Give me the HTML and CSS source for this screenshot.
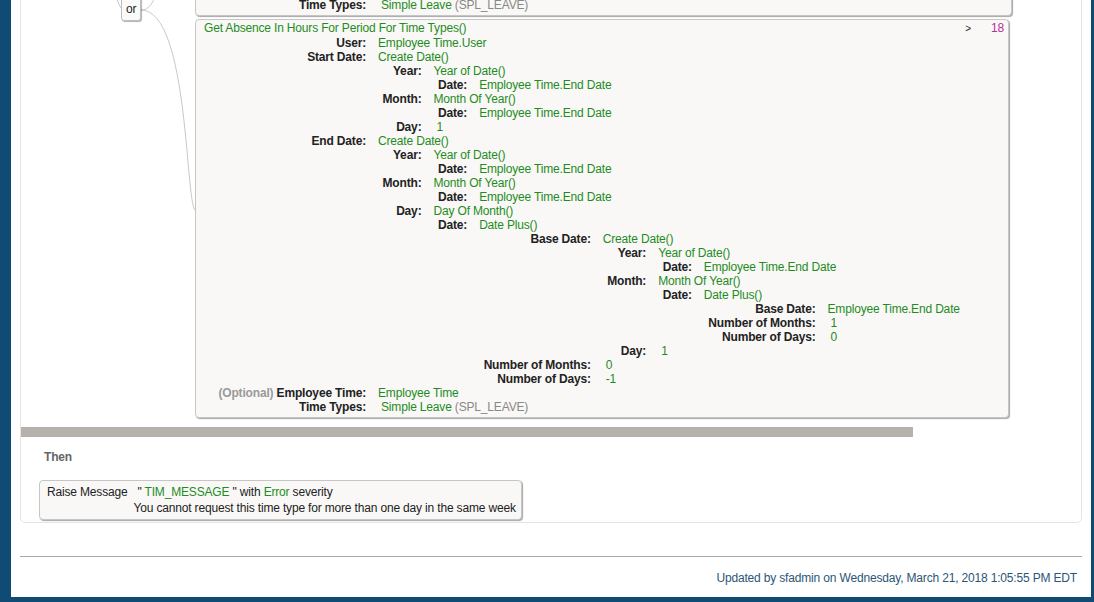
FILE: index.html
```html
<!DOCTYPE html>
<html>
<head>
<meta charset="utf-8">
<title>Rule</title>
<link rel="stylesheet" href="styles.css">
</head>
<body>
<div class="page">
  <div class="card">
    <div class="canvas">
      <div class="diagram">
        <svg class="links" width="174" height="240" viewBox="21 -4 174 240">
          <path d="M141 10 C 190 10, 185 211, 196 211" />
          <path d="M141 10 C 150 10, 152 2, 156 -4" />
          <path d="M121 8 C 119 5, 118 2, 116 -4" />
        </svg>
        <div class="or-node">or</div>
      </div>
      <div class="exprs">
        <div class="expr expr-top">
          <div class="args top">
            <div class="lbl">Time Types:</div><div class="val"><span class="lit">Simple Leave</span> <span class="code">(SPL_LEAVE)</span></div>
          </div>
        </div>
        <div class="expr expr-main">
          <div class="head">
            <span class="fn">Get Absence In Hours For Period For Time Types()</span>
            <span class="meta"><span class="chev">&gt;</span><span class="num">18</span></span>
          </div>
          <div class="args top">
            <div class="lbl">User:</div><div class="val">Employee Time.User</div>
            <div class="lbl">Start Date:</div>
            <div class="val">Create Date()
              <div class="args">
                <div class="lbl">Year:</div>
                <div class="val">Year of Date()
                  <div class="args"><div class="lbl">Date:</div><div class="val">Employee Time.End Date</div></div>
                </div>
                <div class="lbl">Month:</div>
                <div class="val">Month Of Year()
                  <div class="args"><div class="lbl">Date:</div><div class="val">Employee Time.End Date</div></div>
                </div>
                <div class="lbl">Day:</div><div class="val"><span class="lit">1</span></div>
              </div>
            </div>
            <div class="lbl">End Date:</div>
            <div class="val">Create Date()
              <div class="args">
                <div class="lbl">Year:</div>
                <div class="val">Year of Date()
                  <div class="args"><div class="lbl">Date:</div><div class="val">Employee Time.End Date</div></div>
                </div>
                <div class="lbl">Month:</div>
                <div class="val">Month Of Year()
                  <div class="args"><div class="lbl">Date:</div><div class="val">Employee Time.End Date</div></div>
                </div>
                <div class="lbl">Day:</div>
                <div class="val">Day Of Month()
                  <div class="args">
                    <div class="lbl">Date:</div>
                    <div class="val">Date Plus()
                      <div class="args">
                        <div class="lbl">Base Date:</div>
                        <div class="val">Create Date()
                          <div class="args">
                            <div class="lbl">Year:</div>
                            <div class="val">Year of Date()
                              <div class="args"><div class="lbl">Date:</div><div class="val">Employee Time.End Date</div></div>
                            </div>
                            <div class="lbl">Month:</div>
                            <div class="val">Month Of Year()
                              <div class="args">
                                <div class="lbl">Date:</div>
                                <div class="val">Date Plus()
                                  <div class="args">
                                    <div class="lbl">Base Date:</div><div class="val">Employee Time.End Date</div>
                                    <div class="lbl">Number of Months:</div><div class="val"><span class="lit">1</span></div>
                                    <div class="lbl">Number of Days:</div><div class="val"><span class="lit">0</span></div>
                                  </div>
                                </div>
                              </div>
                            </div>
                            <div class="lbl">Day:</div><div class="val"><span class="lit">1</span></div>
                          </div>
                        </div>
                        <div class="lbl">Number of Months:</div><div class="val"><span class="lit">0</span></div>
                        <div class="lbl">Number of Days:</div><div class="val"><span class="lit">-1</span></div>
                      </div>
                    </div>
                  </div>
                </div>
              </div>
            </div>
            <div class="lbl"><span class="opt">(Optional)</span> Employee Time:</div><div class="val">Employee Time</div>
            <div class="lbl">Time Types:</div><div class="val"><span class="lit">Simple Leave</span> <span class="code">(SPL_LEAVE)</span></div>
          </div>
        </div>
      </div>
    </div>
    <div class="hscroll"></div>
    <div class="then">
      <div class="then-title">Then</div>
      <div class="action">
        <div class="act-name">Raise Message</div>
        <div class="act-desc">" <span class="green">TIM_MESSAGE</span> " with <span class="green">Error</span> severity</div>
        <div></div>
        <div class="act-msg">You cannot request this time type for more than one day in the same week</div>
      </div>
    </div>
  </div>
  <div class="footer">Updated by sfadmin on Wednesday, March 21, 2018 1:05:55 PM EDT</div>
</div>
</body>
</html>
```

FILE: styles.css
```css
* { box-sizing: border-box; }
html, body { margin: 0; height: 100%; }
body {
  background: #0f4b74;
  font-family: "Liberation Sans", Arial, sans-serif;
  font-size: 12px;
  line-height: 14px;
  letter-spacing: -0.17px;
  color: #222;
  overflow: hidden;
}
.page {
  margin: -5px 3px 0 11px;
  background: #fff;
  padding: 0 9px 12px 9px;
}
.card {
  border: 1px solid #e4e4e4;
  border-radius: 0 0 5px 5px;
  padding-bottom: 2px;
}
.canvas { display: flex; }
.diagram {
  position: relative;
  width: 174px;
  flex: none;
}
.links {
  position: absolute;
  left: 0;
  top: 0;
  overflow: visible;
}
.links path { fill: none; stroke: #c9c9c9; stroke-width: 1; }
.or-node {
  position: absolute;
  left: 100px;
  top: 1px;
  height: 24px;
  padding: 0 4px;
  line-height: 22px;
  border: 1px solid #bdbdbd;
  border-radius: 3px;
  background: #fafaf9;
  box-shadow: 1px 1px 1px rgba(0,0,0,.3);
  color: #222;
}
.exprs { display: flex; flex-direction: column; gap: 3px; }
.expr {
  background: #f9f8f6;
  border: 1px solid #c6c6c6;
  border-radius: 4px;
  box-shadow: 1px 1px 1px rgba(0,0,0,.35);
  padding: 1px 4px 3px 8px;
}
.expr-top { width: 817px; border-radius: 0 0 4px 4px; }
.expr-main { width: 814px; }
.head { display: flex; justify-content: space-between; line-height: 15px; }
.fn, .val, .green { color: #1e8c1e; }
.meta { display: flex; align-items: center; }
.chev { font-size: 10px; color: #222; margin-right: 20px; }
.num { color: #b0309a; }
.args {
  display: grid;
  grid-template-columns: max-content max-content;
  column-gap: 12px;
  margin-left: 4.5px;
  justify-content: start;
}
.args.top { grid-template-columns: 151px max-content; margin-left: 11px; }
.lbl { text-align: right; font-weight: bold; color: #222; white-space: nowrap; }
.val { white-space: nowrap; }
.opt { color: #9a9a9a; }
.lit { padding-left: 3px; }
.code { color: #888; }
.hscroll {
  margin-top: 9px;
  height: 10px;
  width: 892px;
  background: #b6b2ab;
}
.then { padding: 13px 0 0 18px; }
.then-title { font-weight: bold; color: #666; padding-left: 5px; line-height: 15px; }
.action {
  margin-top: 15px;
  display: inline-grid;
  grid-template-columns: max-content max-content;
  column-gap: 6px;
  line-height: 16px;
  padding: 3px 5px 3px 7px;
  background: #f9f8f6;
  border: 1px solid #c6c6c6;
  border-radius: 4px;
  box-shadow: 1px 1px 1px rgba(0,0,0,.35);
  color: #222;
}
.act-desc { padding-left: 4px; }
.footer {
  margin-top: 33px;
  border-top: 1px solid #a8a8a8;
  padding: 14px 5px 0 0;
  text-align: right;
  color: #2b5676;
}
```
